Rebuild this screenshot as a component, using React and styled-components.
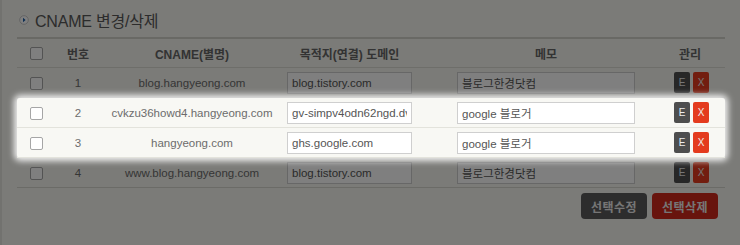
import styled, { createGlobalStyle } from 'styled-components'

const GlobalStyle = createGlobalStyle`
  html, body {
    margin: 0;
    padding: 0;
    background: #f6f6f0;
    overflow: hidden;
  }
  body {
    font-family: 'Liberation Sans', 'Noto Sans CJK KR', sans-serif;
    font-size: 12px;
    color: #6c6c6c;
  }
`

const Page = styled.div`
  width: 740px;
  height: 245px;
  box-sizing: border-box;
  padding: 0 15px;
  border-left: 2px solid #e4e4de;
`

const Title = styled.h3`
  display: flex;
  align-items: center;
  gap: 6px;
  margin: 0;
  height: 37px;
  padding: 2px 0 0 2px;
  box-sizing: border-box;
  font-size: 16px;
  font-weight: normal;
  color: #585858;
  letter-spacing: -0.2px;
`

const Table = styled.div`
  border-top: 2px solid #d2d2cb;
`

const cols = '38px 46px 182px 170px 186px 88px'

const Row = styled.div`
  display: grid;
  grid-template-columns: ${cols};
  height: 30px;
  box-sizing: border-box;
  align-items: center;
  border-bottom: 1px solid ${(p) => (p.$last ? '#d6d6cf' : '#e3e3dc')};
`

const HeadRow = styled(Row)`
  height: 29px;
  font-weight: bold;
  color: #666;
  border-bottom-color: #dcdcd5;
`

const Cell = styled.div`
  display: flex;
  align-items: center;
  justify-content: ${(p) => p.$align || 'center'};
  padding-left: ${(p) => p.$pl || 0}px;
  white-space: nowrap;
  overflow: hidden;
`

const BodyText = styled.span`
  font-size: 11.5px;
`

const HeadText = styled.span`
  width: ${(p) => p.$w}px;
  text-align: center;
`

const Spotlight = styled.div`
  position: relative;
  z-index: 1;
  background: #f8f8f4;
  border-radius: 3px;
  box-shadow: 0 0 6px 3px rgba(255, 255, 255, 0.9),
    0 0 0 3000px rgba(0, 0, 0, 0.5);
`

const Check = styled.span`
  width: 11px;
  height: 11px;
  border: 1px solid #a6a6a6;
  border-radius: 2px;
  background: #fff;
  margin-top: 1px;
`

const Field = styled.input`
  width: ${(p) => p.$w}px;
  height: 22px;
  box-sizing: border-box;
  margin: 0;
  padding: 0 4px;
  border: 1px solid #cfcfcf;
  background: #fff;
  font-family: 'Liberation Sans', 'Noto Sans CJK KR', sans-serif;
  font-size: 11.5px;
  color: #555;
  outline: none;
`

const Tools = styled.div`
  display: flex;
  gap: 3px;
`

const MiniBtn = styled.button`
  width: 16px;
  height: 21px;
  padding: 0;
  border: 0;
  border-radius: 2px;
  background: ${(p) => (p.$danger ? '#e43b1e' : '#4e4e4e')};
  color: #eee;
  font-family: 'Liberation Sans', sans-serif;
  font-size: 10px;
  line-height: 21px;
`

const Footer = styled.div`
  display: flex;
  justify-content: flex-end;
  gap: 5px;
  padding: 5px 7px 0 0;
`

const BigBtn = styled.button`
  width: 66px;
  height: 26px;
  padding: 0;
  border: 0;
  border-radius: 4px;
  background: ${(p) => (p.$danger ? '#d0281a' : '#5a5a5a')};
  color: #ececec;
  font-family: 'Noto Sans CJK KR', sans-serif;
  font-size: 12px;
  font-weight: bold;
  letter-spacing: 0.5px;
`

const Bullet = () => (
  <svg width='10' height='10' viewBox='0 0 10 10'>
    <circle cx='5' cy='5' r='4.3' fill='#fff' stroke='#c8c8c8' strokeWidth='1' />
    <path d='M4 2.8 L6.6 5 L4 7.2 Z' fill='#1d5ea6' />
  </svg>
)

const rows = [
  { no: 1, cname: 'blog.hangyeong.com', target: 'blog.tistory.com', memo: '블로그한경닷컴' },
  { no: 2, cname: 'cvkzu36howd4.hangyeong.com', target: 'gv-simpv4odn62ngd.dv.googlehosted.com', memo: 'google 블로거' },
  { no: 3, cname: 'hangyeong.com', target: 'ghs.google.com', memo: 'google 블로거' },
  { no: 4, cname: 'www.blog.hangyeong.com', target: 'blog.tistory.com', memo: '블로그한경닷컴' },
]

const DataRow = ({ r, last }) => (
  <Row $last={last}>
    <Cell><Check /></Cell>
    <Cell><BodyText>{r.no}</BodyText></Cell>
    <Cell><BodyText>{r.cname}</BodyText></Cell>
    <Cell $align='flex-start' $pl={4}>
      <Field $w={125} defaultValue={r.target} />
    </Cell>
    <Cell $align='flex-start' $pl={4}>
      <Field $w={178} defaultValue={r.memo} />
    </Cell>
    <Cell $align='flex-start' $pl={35}>
      <Tools>
        <MiniBtn>E</MiniBtn>
        <MiniBtn $danger>X</MiniBtn>
      </Tools>
    </Cell>
  </Row>
)

export default function App() {
  return (
    <>
      <GlobalStyle />
      <Page>
        <Title>
          <Bullet />
          CNAME 변경/삭제
        </Title>
        <Table>
          <HeadRow>
            <Cell><Check /></Cell>
            <Cell>번호</Cell>
            <Cell>CNAME(별명)</Cell>
            <Cell $align='flex-start' $pl={4}>
              <HeadText $w={125}>목적지(연결) 도메인</HeadText>
            </Cell>
            <Cell $align='flex-start' $pl={4}>
              <HeadText $w={178}>메모</HeadText>
            </Cell>
            <Cell $align='flex-start' $pl={33}>
              <HeadText $w={36}>관리</HeadText>
            </Cell>
          </HeadRow>
          <DataRow r={rows[0]} />
          <Spotlight>
            <DataRow r={rows[1]} />
            <DataRow r={rows[2]} />
          </Spotlight>
          <DataRow r={rows[3]} last />
        </Table>
        <Footer>
          <BigBtn>선택수정</BigBtn>
          <BigBtn $danger>선택삭제</BigBtn>
        </Footer>
      </Page>
    </>
  )
}
